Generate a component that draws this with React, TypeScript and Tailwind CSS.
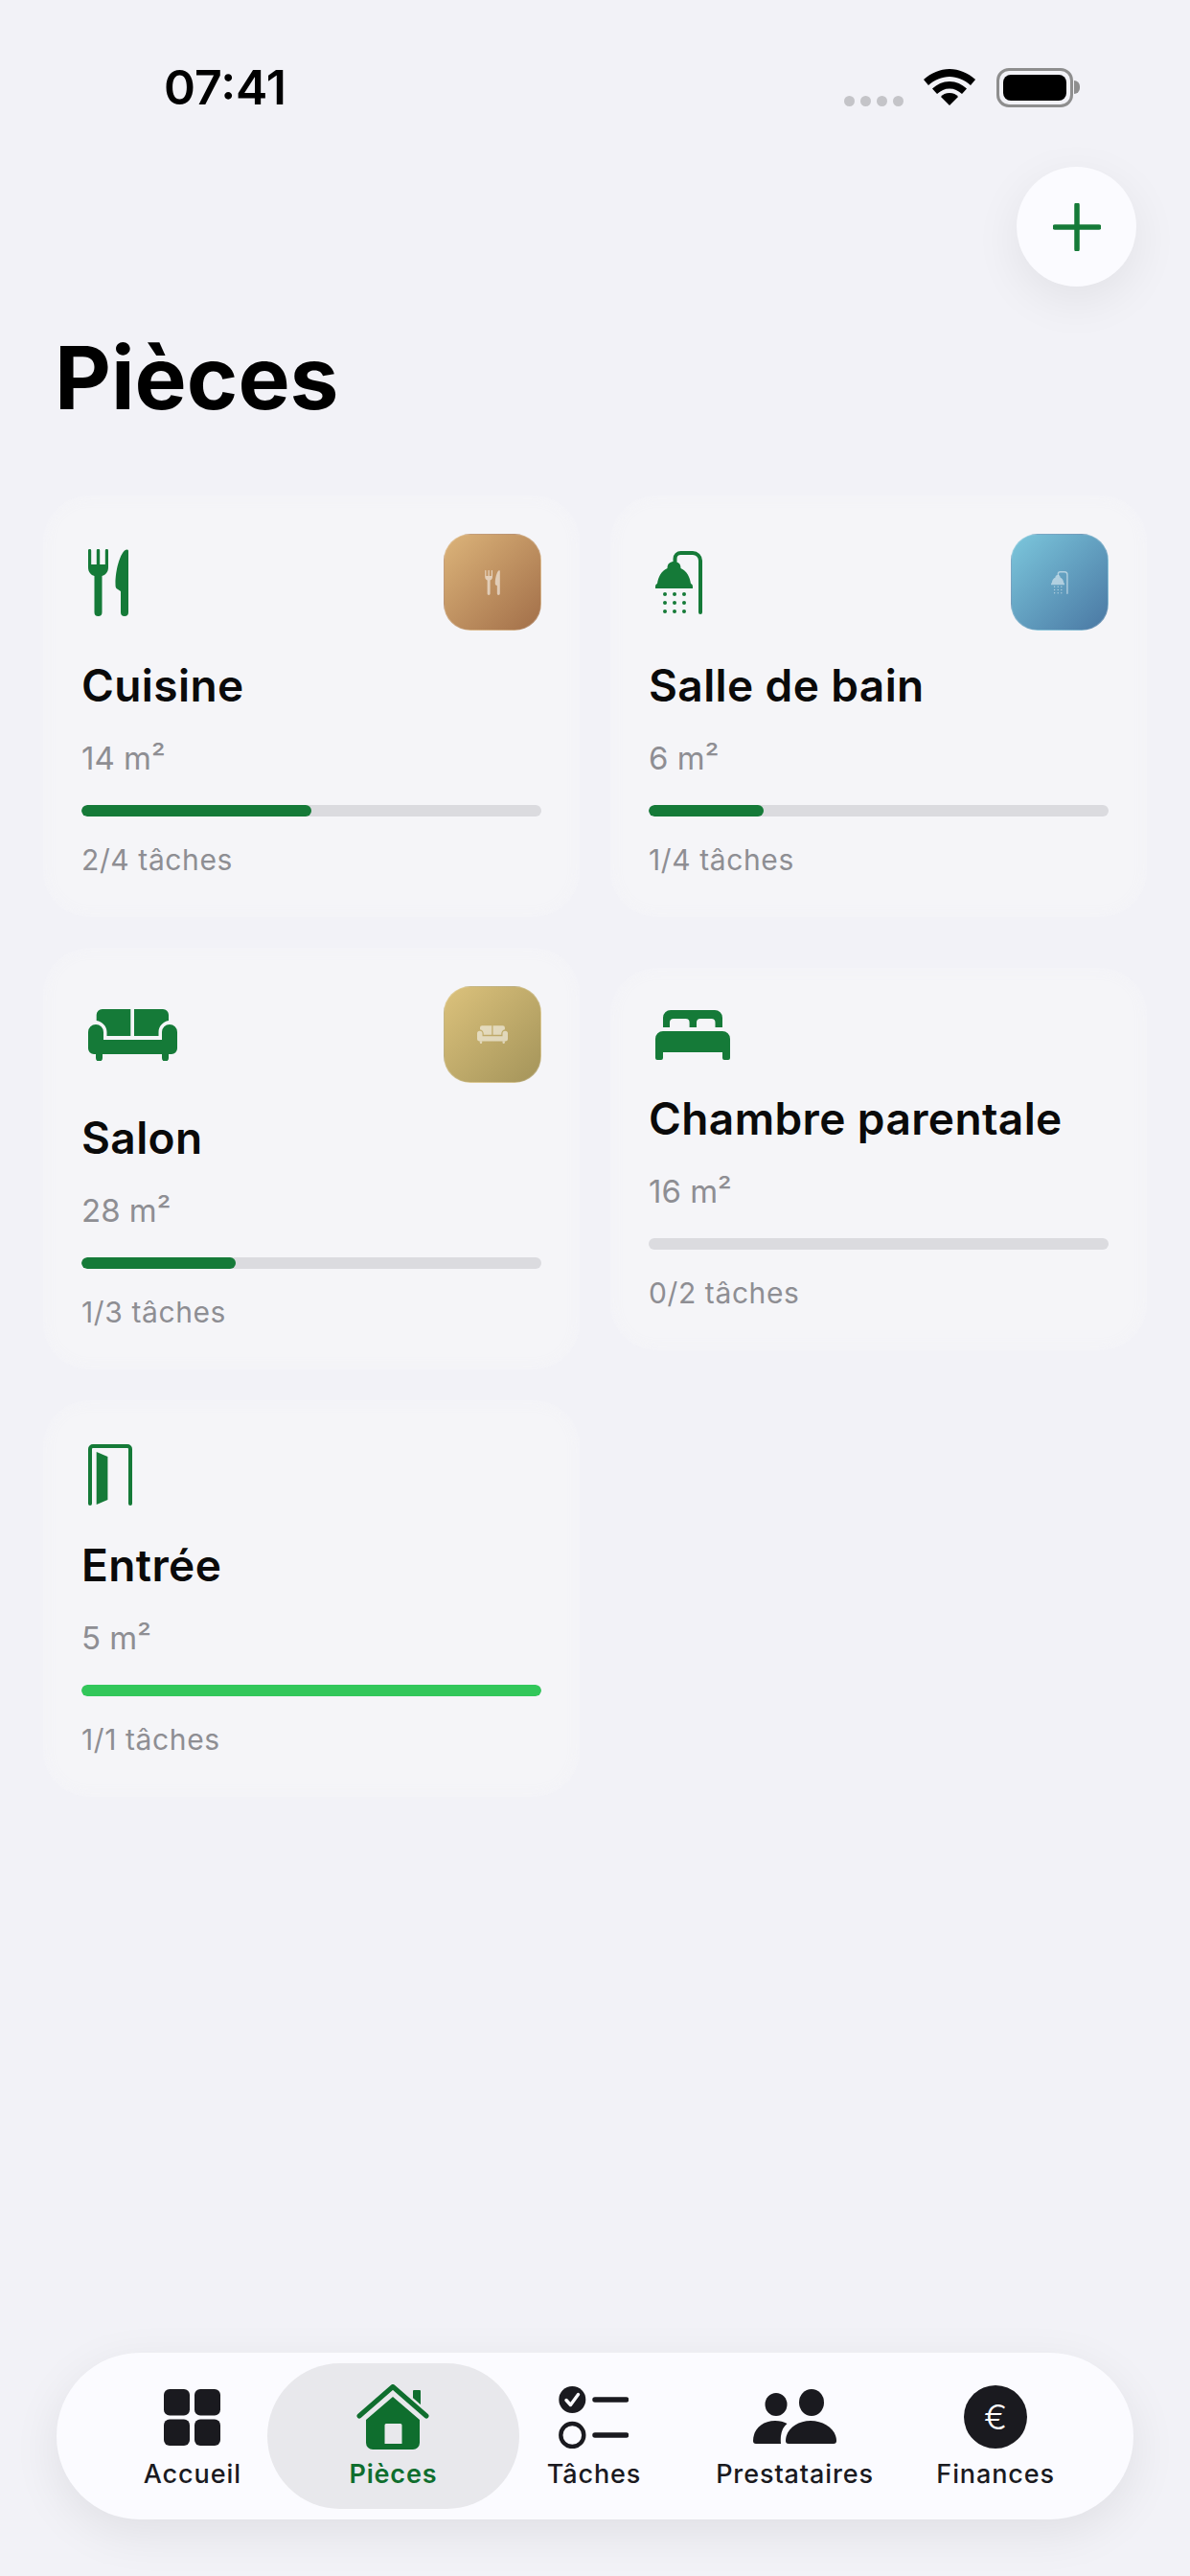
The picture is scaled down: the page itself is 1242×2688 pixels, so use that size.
import type { ReactNode } from "react";

type IconProps = { className: string };

const ForkKnife = ({ className }: IconProps) => (
  <svg viewBox="0 0 42 70" className={className} fill="currentColor">
    <path d="M0 1.5A1.5 1.5 0 0 1 3.2 1.5V16H8.8V1.5A1.6 1.6 0 0 1 12.2 1.5V16H17.8V1.5A1.6 1.6 0 0 1 21 1.5V19C21 24 18 27 14.5 28V66A4 4 0 0 1 6.5 66V28C3 27 0 24 0 19Z" />
    <path d="M42 2V66A4 4 0 0 1 34 66V44L29.5 41C28.5 40 28.5 38 28.5 36C28.5 22 33 6 38 1.5C40 0 42 0 42 2Z" />
  </svg>
);

const Shower = ({ className }: IconProps) => (
  <svg viewBox="0 0 50 66" className={className} fill="currentColor">
    <path
      d="M20.5 11V8A6 6 0 0 1 26.5 2H39A8 8 0 0 1 47 10V64"
      fill="none"
      stroke="currentColor"
      strokeWidth="4"
      strokeLinecap="round"
    />
    <path d="M12.5 18C12.5 13 15.5 11 19.5 11C23.5 11 26.5 13 26.5 18C33 21 36 27 37 34C38.5 34.5 39 36 39 37V39H0V37C0 36 .5 34.5 2 34C3 27 6 21 12.5 18Z" />
    {[45, 54, 63].map((y) =>
      [10, 20, 30].map((x) => <circle key={`${x}-${y}`} cx={x} cy={y} r="2" />)
    )}
  </svg>
);

const Sofa = ({ className }: IconProps) => (
  <svg viewBox="0 0 93 54" className={className} fill="currentColor">
    <path d="M8.7 12V6A6 6 0 0 1 14.7 0H44.3V28H19.5V24C19.5 18 15 13 8.7 12Z" />
    <path d="M48 0H78A6 6 0 0 1 84 6V12C78 13 73.5 18 73.5 24V28H48Z" />
    <path d="M0 24A8 8 0 0 1 16 24V32H77V24A8 8 0 0 1 93 24V41A6 6 0 0 1 87 47H6A6 6 0 0 1 0 41Z" />
    <path d="M8 47H15V51A3 3 0 0 1 8 51Z" />
    <path d="M77 47H84V51A3 3 0 0 1 77 51Z" />
  </svg>
);

const Bed = ({ className }: IconProps) => (
  <svg viewBox="0 0 78 52" className={className} fill="currentColor">
    <path d="M8 8A8 8 0 0 1 16 0H62A8 8 0 0 1 70 8V18H62.5V13A4 4 0 0 0 58.5 9H47A4 4 0 0 0 43 13V18H35.6V13A4 4 0 0 0 31.6 9H19A4 4 0 0 0 15 13V18H8Z" />
    <path d="M8 22H70A8 8 0 0 1 78 30V50A2 2 0 0 1 76 52H72A2 2 0 0 1 70 50V44H8V50A2 2 0 0 1 6 52H2A2 2 0 0 1 0 50V30A8 8 0 0 1 8 22Z" />
  </svg>
);

const Door = ({ className }: IconProps) => (
  <svg viewBox="0 0 46 64" className={className} fill="currentColor">
    <path
      d="M2 62V5A3 3 0 0 1 5 2H41A3 3 0 0 1 44 5V62"
      fill="none"
      stroke="currentColor"
      strokeWidth="4"
      strokeLinecap="round"
    />
    <path d="M8.7 8L20.4 13V58L8.7 63Z" />
  </svg>
);

const GridIcon = () => (
  <svg viewBox="0 0 59 59" className="w-[59px] h-[59px]" fill="#1a1a1f">
    <rect x="0" y="0" width="27" height="27.5" rx="6" />
    <rect x="32" y="0" width="27" height="27.5" rx="6" />
    <rect x="0" y="31.5" width="27" height="27.5" rx="6" />
    <rect x="32" y="31.5" width="27" height="27.5" rx="6" />
  </svg>
);

const HouseIcon = () => (
  <svg viewBox="0 0 76 68" className="w-[76px] h-[68px]" fill="#0f6e2e">
    <path d="M59 7A1 1 0 0 1 60 6H66A1 1 0 0 1 67 7V26H59Z" />
    <path
      d="M3 33L38 2.5L73 33"
      fill="none"
      stroke="#e8e8ec"
      strokeWidth="10"
      strokeLinecap="round"
      strokeLinejoin="round"
    />
    <path
      d="M3 33L38 2.5L73 33"
      fill="none"
      stroke="#0f6e2e"
      strokeWidth="5"
      strokeLinecap="round"
      strokeLinejoin="round"
    />
    <path
      fillRule="evenodd"
      d="M38 13L66 37V61A7 7 0 0 1 59 68H17A7 7 0 0 1 10 61V37ZM31 41A1.5 1.5 0 0 0 29.5 42.5V62H47.5V42.5A1.5 1.5 0 0 0 46 41Z"
    />
  </svg>
);

const TasksIcon = () => (
  <svg viewBox="0 0 73 65" className="w-[73px] h-[65px]">
    <circle cx="14.3" cy="14" r="14" fill="#1a1a1f" />
    <path
      d="M8 14.5L12.5 19.5L20.5 8.5"
      fill="none"
      stroke="#fbfbff"
      strokeWidth="3.4"
      strokeLinecap="round"
      strokeLinejoin="round"
    />
    <circle cx="14.3" cy="51" r="12" fill="none" stroke="#1a1a1f" strokeWidth="4.4" />
    <path d="M38 14H70.5M38 51H70.5" stroke="#1a1a1f" strokeWidth="5.5" strokeLinecap="round" />
  </svg>
);

const PeopleIcon = () => (
  <svg viewBox="0 0 88 58" className="w-[88px] h-[58px]" fill="#1a1a1f">
    <ellipse cx="24" cy="16" rx="11.5" ry="12" />
    <ellipse cx="61" cy="14" rx="13" ry="14" />
    <path d="M0 54C0 42 9.5 33 23 33C28 33 32 34.2 35.5 36C30.5 40 28 47 29 57H3A3 3 0 0 1 0 54Z" />
    <path d="M34 54C34 42 46 33 60 33C74 33 87 42 87 54A3 3 0 0 1 84 57H37A3 3 0 0 1 34 54Z" />
  </svg>
);

const EuroIcon = () => (
  <div className="w-[66px] h-[66px] rounded-full bg-[#1a1a1f] flex items-center justify-center text-[36px] leading-none font-light text-white">
    €
  </div>
);

type Room = {
  name: string;
  area: string;
  tasks: string;
  progress: string;
  barColor: string;
  rowHeight: string;
  icon: ReactNode;
  thumb?: ReactNode;
};

const rooms: Room[] = [
  {
    name: "Cuisine",
    area: "14 m²",
    tasks: "2/4 tâches",
    progress: "50%",
    barColor: "bg-[#157a38]",
    rowHeight: "h-[101px]",
    icon: <ForkKnife className="w-[42px] h-[70px] ml-[7px]" />,
    thumb: (
      <div className="w-[102px] h-[101px] rounded-[28px] bg-gradient-to-br from-[#dcb47a] to-[#a26f49] border border-white/20 flex items-center justify-center">
        <ForkKnife className="w-[16px] h-[26px] text-white/55" />
      </div>
    ),
  },
  {
    name: "Salle de bain",
    area: "6 m²",
    tasks: "1/4 tâches",
    progress: "25%",
    barColor: "bg-[#157a38]",
    rowHeight: "h-[101px]",
    icon: <Shower className="w-[50px] h-[66px] ml-[7px]" />,
    thumb: (
      <div className="w-[102px] h-[101px] rounded-[28px] bg-gradient-to-br from-[#7cc7dc] to-[#4a78a3] border border-white/20 flex items-center justify-center">
        <Shower className="w-[18px] h-[24px] text-white/50" />
      </div>
    ),
  },
  {
    name: "Salon",
    area: "28 m²",
    tasks: "1/3 tâches",
    progress: "33.5%",
    barColor: "bg-[#157a38]",
    rowHeight: "h-[101px]",
    icon: <Sofa className="w-[93px] h-[54px] ml-[7px]" />,
    thumb: (
      <div className="w-[102px] h-[101px] rounded-[28px] bg-gradient-to-br from-[#dcc27c] to-[#a4945a] border border-white/20 flex items-center justify-center">
        <Sofa className="w-[32px] h-[19px] text-white/55" />
      </div>
    ),
  },
  {
    name: "Chambre parentale",
    area: "16 m²",
    tasks: "0/2 tâches",
    progress: "0%",
    barColor: "bg-[#157a38]",
    rowHeight: "h-[60px]",
    icon: <Bed className="w-[78px] h-[52px] ml-[7px]" />,
  },
  {
    name: "Entrée",
    area: "5 m²",
    tasks: "1/1 tâches",
    progress: "100%",
    barColor: "bg-[#32c75a]",
    rowHeight: "h-[75px]",
    icon: <Door className="w-[46px] h-[64px] ml-[7px]" />,
  },
];

const tabs = [
  { label: "Accueil", icon: <GridIcon /> },
  { label: "Pièces", icon: <HouseIcon />, active: true },
  { label: "Tâches", icon: <TasksIcon /> },
  { label: "Prestataires", icon: <PeopleIcon /> },
  { label: "Finances", icon: <EuroIcon /> },
];

const RoomCard = ({ room }: { room: Room }) => (
  <div className="bg-[#f5f5f8] rounded-[48px] pt-[40px] px-[40px] pb-[42px] shadow-[inset_0_0_14px_rgba(242,242,247,0.9)]">
    <div className={`flex items-center justify-between text-[#157a38] ${room.rowHeight}`}>
      {room.icon}
      {room.thumb}
    </div>
    <h2 className="mt-[29px] text-[46px] leading-[56px] font-semibold text-[#0a0a0a] tracking-[0.4px]">
      {room.name}
    </h2>
    <p className="mt-[28px] text-[33px] leading-[40px] text-[#8e8e93]">{room.area}</p>
    <div className="mt-[29px] h-[12px] rounded-full bg-[#dbdbdf] overflow-hidden">
      <div className={`h-full rounded-full ${room.barColor}`} style={{ width: room.progress }} />
    </div>
    <p className="mt-[27px] text-[30px] leading-[36px] text-[#8e8e93] tracking-[0.6px]">
      {room.tasks}
    </p>
  </div>
);

const StatusBar = () => (
  <div className="h-[174px] pt-[8px] pl-[171px] pr-[115px] flex items-center justify-between">
    <span className="text-[50px] font-semibold leading-none text-black">07:41</span>
    <div className="flex items-center">
      <div className="flex gap-[6px] mt-[29px] mr-[21px]">
        <div className="w-[11px] h-[11px] rounded-full bg-[#c4c4c8]" />
        <div className="w-[11px] h-[11px] rounded-full bg-[#c4c4c8]" />
        <div className="w-[11px] h-[11px] rounded-full bg-[#c4c4c8]" />
        <div className="w-[11px] h-[11px] rounded-full bg-[#c4c4c8]" />
      </div>
      <svg viewBox="0 0 54 38" className="w-[54px] h-[38px] mr-[22px]" fill="black">
        <path d="M27 0C17 0 8 4 0 11L5 17C11 11.500 19 8 27 8C35 8 43 11.500 49 17L54 11C46 4 37 0 27 0Z" />
        <path d="M27 13C20 13 14 16 9 20.500L14 26C18 22.500 22 20.500 27 20.500C32 20.500 36 22.500 40 26L45 20.500C40 16 34 13 27 13Z" />
        <path d="M27 25C23 25 20 26.500 18 29L27 38L36 29C34 26.500 31 25 27 25Z" />
      </svg>
      <div className="flex items-center">
        <div className="w-[80px] h-[41px] rounded-[13px] border-[3px] border-[#8e8e8e] p-[4px]">
          <div className="w-full h-full rounded-[8px] bg-black" />
        </div>
        <div className="w-[6px] h-[14px] rounded-r-full bg-[#8e8e8e] ml-[1px]" />
      </div>
    </div>
  </div>
);

const App = () => {
  return (
    <div className="w-[1242px] h-[2688px] bg-[#f2f2f7] flex flex-col [font-family:Inter,sans-serif]">
      <StatusBar />

      <div className="flex justify-end pr-[56px]">
        <button className="w-[125px] h-[125px] rounded-full bg-[#fbfbff] flex items-center justify-center shadow-[0_14px_50px_rgba(0,0,0,0.07)]">
          <svg viewBox="0 0 50 50" className="w-[50px] h-[50px]">
            <path d="M25 2V48M2 25H48" stroke="#157a38" strokeWidth="5.5" strokeLinecap="round" />
          </svg>
        </button>
      </div>

      <h1 className="mt-[41px] pl-[57px] text-[91px] leading-[108px] font-bold text-black">
        Pièces
      </h1>

      <div className="mt-[69px] mx-[45px] grid grid-cols-2 gap-[32px] items-center">
        {rooms.map((room) => (
          <RoomCard key={room.name} room={room} />
        ))}
      </div>

      <nav className="mt-auto mb-[59px] mx-[59px] h-[174px] rounded-[87px] bg-[#fbfbff] pl-[37px] pr-[39px] grid grid-cols-5 shadow-[0_14px_50px_rgba(0,0,0,0.08)]">
        {tabs.map((tab) => (
          <div key={tab.label} className="relative flex flex-col items-center pt-[32px]">
            {tab.active && (
              <div className="absolute inset-y-[11px] -inset-x-[27px] rounded-[76px] bg-[#e8e8ec]" />
            )}
            <div className="relative h-[70px] flex items-center justify-center">{tab.icon}</div>
            <span
              className={
                tab.active
                  ? "relative mt-[8px] text-[27px] leading-[34px] font-semibold text-[#0f6e2e] tracking-[0.8px] whitespace-nowrap"
                  : "relative mt-[8px] text-[27px] leading-[34px] font-medium text-[#1a1a1f] tracking-[0.9px] whitespace-nowrap"
              }
            >
              {tab.label}
            </span>
          </div>
        ))}
      </nav>
    </div>
  );
};

export default App;
